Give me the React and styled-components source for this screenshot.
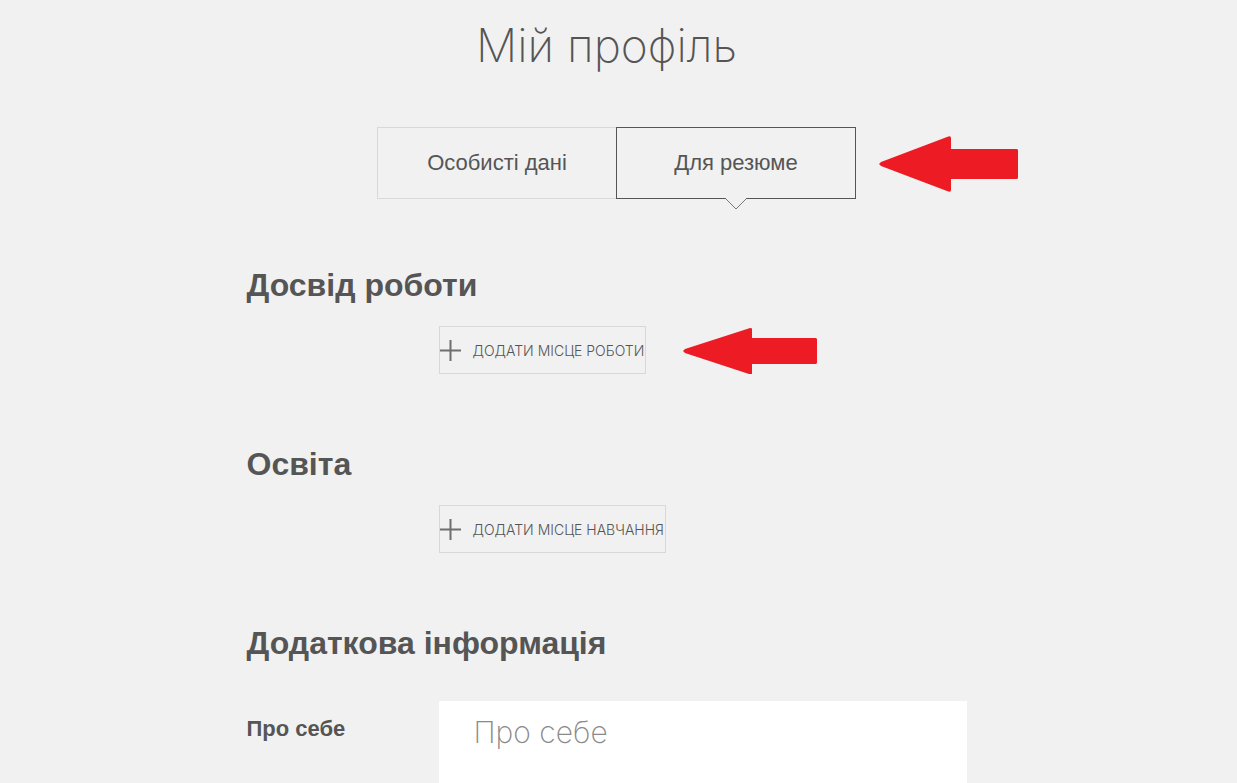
import React, { useState } from 'react'
import styled, { createGlobalStyle } from 'styled-components'

const TABS = ['Особисті дані', 'Для резюме']

const PlusIcon = () => (
  <Plus width="21" height="21" viewBox="0 0 21 21" aria-hidden="true">
    <path d="M0 10.5H21M10.5 0V21" stroke="#6e6e6e" strokeWidth="2" />
  </Plus>
)

const App = () => {

  const [active, setActive] = useState(1)

  return (
    <>
      <GlobalStyle />
      <Page>
        <Title>Мій профіль</Title>
        <Tabs role="tablist">
          {TABS.map((name, i) => (
            <Tab
              key={name}
              type="button"
              role="tab"
              aria-selected={i === active}
              $active={i === active}
              onClick={() => setActive(i)}
            >
              {name}
              {i === active && (
                <Notch width="22" height="12" viewBox="0 0 22 12" aria-hidden="true">
                  <path d="M1 0H21V1L11 11L1 1Z" fill="#f1f1f1" />
                  <path d="M0.5 0.5L11 11L21.5 0.5" fill="none" stroke="#777777" />
                </Notch>
              )}
            </Tab>
          ))}
          <TabArrow width="140" height="56" viewBox="0 0 140 56" aria-hidden="true">
            <path d="M0 28L2 26L68 1Q72 -1 72 2V13H138L139 14V42L138 43H72V54Q72 57 68 55L2 30Z" fill="#ed1c24" />
          </TabArrow>
        </Tabs>

        <Section>
          <Heading>Досвід роботи</Heading>
          <Row>
            <AddButton type="button"><PlusIcon />Додати місце роботи</AddButton>
            <AddArrow width="135" height="46" viewBox="0 0 135 46" aria-hidden="true">
              <path d="M0 23L2 21L64 1Q69 -1 69 1V10H133L134 11V35L133 36H69V46H66L2 25Z" fill="#ed1c24" />
            </AddArrow>
          </Row>
        </Section>

        <Section>
          <Heading>Освіта</Heading>
          <Row>
            <AddButton type="button"><PlusIcon />Додати місце навчання</AddButton>
          </Row>
        </Section>

        <InfoSection>
          <Heading>Додаткова інформація</Heading>
          <Field>
            <Label htmlFor="about">Про себе</Label>
            <TextArea id="about" placeholder="Про себе" />
          </Field>
        </InfoSection>
      </Page>
    </>
  )
}

export default App

const GlobalStyle = createGlobalStyle`
  * {
    box-sizing: border-box;
  }
  body {
    margin: 0;
    background: #f1f1f1;
    color: #555555;
    font-family: "Liberation Sans", Arial, sans-serif;
  }
  button, textarea {
    font-family: inherit;
    color: inherit;
  }
`

const Page = styled.main`
  display: flex;
  flex-direction: column;
  width: 100%;
  max-width: 744px;
  min-height: 100vh;
  margin: 0 auto;
  padding-right: 24px;
`

const Title = styled.h1`
  margin: 15px 0 52px;
  font-family: Inter, sans-serif;
  font-size: 46px;
  font-weight: 200;
  line-height: 60px;
  text-align: center;
`

const Tabs = styled.div`
  position: relative;
  display: flex;
  align-self: center;
  margin: 0 0 66px 20px;
`

const Tab = styled.button`
  position: relative;
  z-index: ${({ $active }) => ($active ? 1 : 0)};
  width: 240px;
  height: 72px;
  padding: 0;
  border: 1px solid ${({ $active }) => ($active ? '#555555' : '#d8d8d8')};
  background: transparent;
  font-size: 22px;
  cursor: pointer;

  & + & {
    margin-left: -1px;
  }
`

const Notch = styled.svg`
  position: absolute;
  top: 100%;
  left: 50%;
  transform: translateX(-50%);
`

const TabArrow = styled.svg`
  position: absolute;
  top: 9px;
  left: calc(100% + 23px);
`

const Section = styled.section`
  margin-bottom: 70px;
`

const InfoSection = styled.section`
  display: flex;
  flex: 1;
  flex-direction: column;
`

const Heading = styled.h2`
  margin: 0 0 21px;
  font-size: 32px;
  line-height: 40px;
`

const Row = styled.div`
  display: flex;
  align-items: flex-end;
  padding-left: 192px;
`

const AddButton = styled.button`
  display: flex;
  align-items: center;
  gap: 12px;
  height: 48px;
  padding: 0 1px 0 0;
  border: 1px solid #d8d8d8;
  background: transparent;
  font-family: Inter, sans-serif;
  font-size: 14px;
  font-weight: 300;
  text-transform: uppercase;
  white-space: nowrap;
  cursor: pointer;
`

const Plus = styled.svg`
  flex: none;
`

const AddArrow = styled.svg`
  flex: none;
  margin-left: 37px;
`

const Field = styled.div`
  display: flex;
  flex: 1;
  padding-top: 17px;
`

const Label = styled.label`
  flex: none;
  width: 192px;
  padding-top: 14px;
  font-size: 22px;
  font-weight: bold;
  line-height: 28px;
`

const TextArea = styled.textarea`
  flex: 1;
  min-width: 0;
  padding: 11px 35px;
  border: 0;
  background: #ffffff;
  font-family: Inter, sans-serif;
  font-size: 30px;
  font-weight: 200;
  line-height: 40px;
  resize: none;

  &::placeholder {
    color: #8a8a8a;
    opacity: 1;
  }
`
